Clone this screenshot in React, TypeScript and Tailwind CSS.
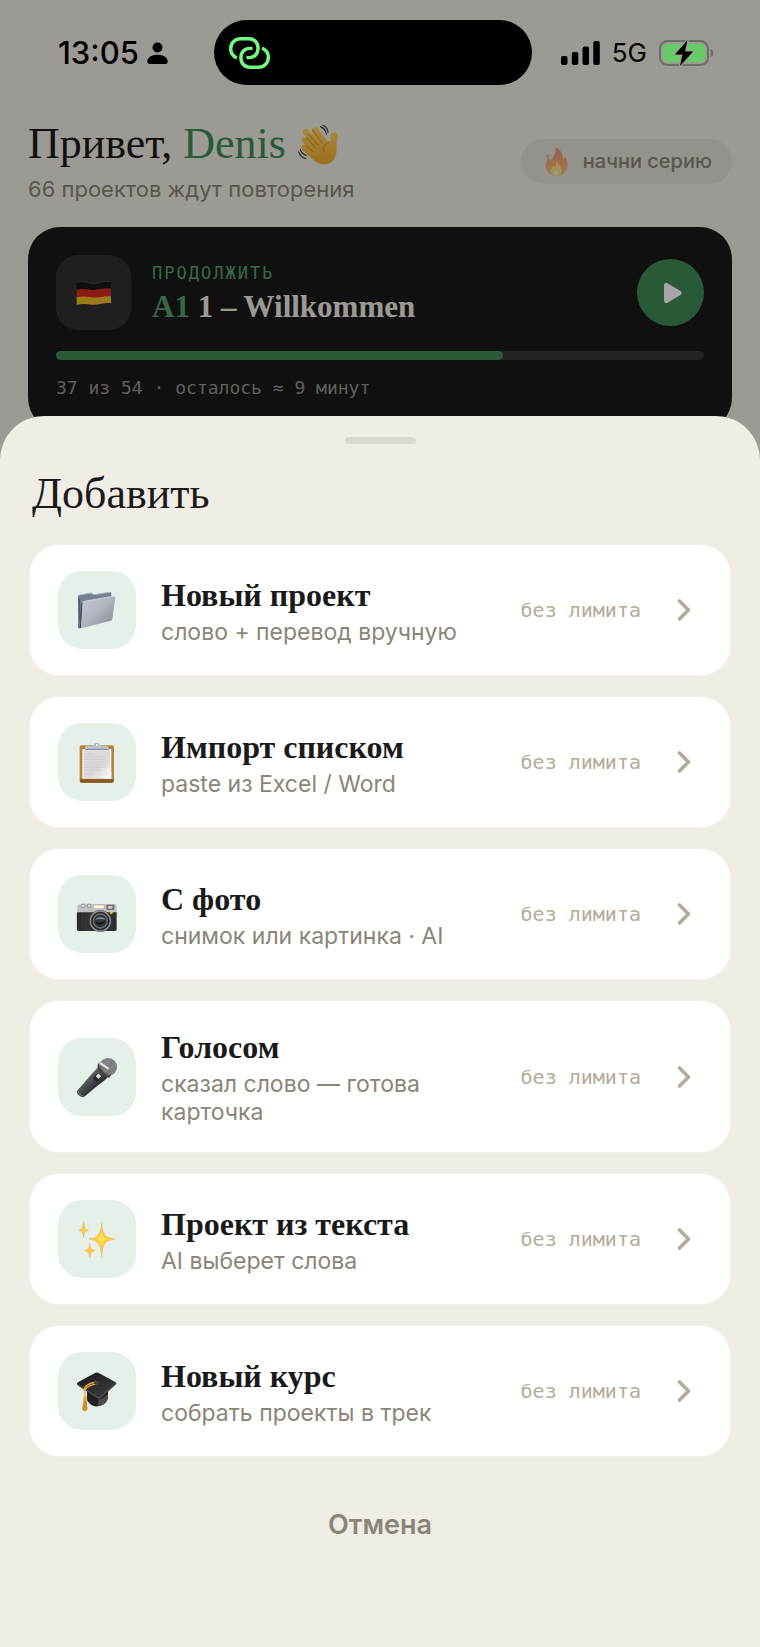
import React from "react";
import { ChevronRight } from "lucide-react";

type Action = {
  title: string;
  hint: string;
  icon: React.ReactNode;
};

/* Emoji-style drawings */

const WaveIcon = () => (
  <svg viewBox="890 370 130 130" className="size-[43px]" aria-hidden="true">
    <defs>
      <linearGradient id="hand" x1="0" y1="0" x2="0" y2="1">
        <stop offset="0" stopColor="#ffd860" />
        <stop offset="1" stopColor="#f0a92c" />
      </linearGradient>
    </defs>
    <path
      d="M941 385c5-5 12-3 16 3l28 37c4 5 9 4 9-2 0-9-1-18 6-22 8-4 16 1 16 9-1 12-4 20-3 32 2 31-12 52-36 53-18 1-31-10-42-20l-26-24c-9-9 2-20 11-13l-9-10c-9-11 4-20 12-12l-10-13c-9-12 6-22 14-12l14 16-3-9c-3-5-1-10 3-13z"
      fill="url(#hand)"
    />
    <g fill="none" stroke="#c9791a" strokeWidth="2.5" strokeLinecap="round">
      <path d="M927 403l31 34M923 416l27 30M920 438l22 19M941 392l28 37" />
      <path d="M990 427c-15 7-20 18-15 31" />
    </g>
    <g fill="none" stroke="#3c3c3c" strokeWidth="3.5" strokeLinecap="round">
      <path d="M964 381c10 4 16 12 18 23M972 377c8 4 13 12 15 21" />
      <path d="M898 457c4 11 11 18 22 21M903 450c3 9 9 15 18 18" />
    </g>
  </svg>
);

const FlameIcon = () => (
  <svg viewBox="485 437 88 88" className="size-[29px] opacity-60" aria-hidden="true">
    <defs>
      <linearGradient id="flame" x1="0" y1="0" x2="0" y2="1">
        <stop offset="0" stopColor="#f0543c" />
        <stop offset="0.6" stopColor="#ff8a35" />
        <stop offset="1" stopColor="#ffb347" />
      </linearGradient>
    </defs>
    <path
      d="M526 438c18 10 22 22 23 37 4-3 5-7 5-11 11 15 11 35 2 47-6 9-16 13-27 13-20 0-33-13-33-29 0-13 7-17 6-28 5 3 8 8 8 13 10-11 19-24 16-42z"
      fill="url(#flame)"
    />
    <path d="M502 459c4 2 4 7 0 12-3-4-3-9 0-12z" fill="#f0543c" />
    <path d="M527 476c3 11 18 19 18 34 0 9-7 13-16 13s-17-5-17-14c0-8 6-10 7-17 3 2 5 5 5 8 4-6 6-14 3-24z" fill="#ffe04a" />
    <path d="M528 503c5 6 9 9 8 14-1 9-16 9-17 0 0-5 6-8 9-14z" fill="#fff6b0" />
  </svg>
);

const FlagIcon = () => (
  <svg viewBox="217 170 126 126" className="size-[42px]" aria-hidden="true">
    <path d="M228 201c24-9 34 6 57 3 19-2 30-8 46-5v22c-22-3-40 8-62 4-15-3-26-4-41 1z" fill="#181818" />
    <path d="M228 224c15-5 26-3 41-1 22 4 40-7 62-3v25c-22-3-38 6-60 3-16-2-28-3-43 0z" fill="#d92a21" />
    <path d="M228 246c16-4 29-2 43 0 22 3 38-6 60-3v21c-20-4-35 6-57 4-18-2-28-4-46 0z" fill="#f0bd2d" />
    <path d="M228 201c24-9 34 6 57 3 19-2 30-8 46-5" fill="none" stroke="#555" strokeWidth="2" />
  </svg>
);

const FolderIcon = () => (
  <svg viewBox="228 421 126 126" className="size-[42px]" aria-hidden="true">
    <defs>
      <linearGradient id="folder" x1="0" y1="0" x2="1" y2="1">
        <stop offset="0" stopColor="#c9ccd5" />
        <stop offset="0.5" stopColor="#b0b4bf" />
        <stop offset="1" stopColor="#80848f" />
      </linearGradient>
    </defs>
    <path d="M234 444c0-3 2-5 5-5l34-6c4 0 5 5 9 5l48-8c3 0 4 2 4 5v15l-90 88c-5 3-10 1-10-4z" fill="#75808f" />
    <path d="M234 444c0-3 2-5 5-5l34-6c4 0 5 5 9 5l50-7" fill="none" stroke="#a8b2bf" strokeWidth="3" />
    <path d="M237 450l5 84" stroke="#4e5866" strokeWidth="5" />
    <path d="M247 463c0-3 2-5 5-5l90-16c3 0 4 1 4 4l-9 64c0 4-2 5-5 6l-86 22c-3 1-5-1-5-4z" fill="url(#folder)" />
    <path d="M247 463c0-3 2-5 5-5l92-16" fill="none" stroke="#dfe2e8" strokeWidth="2" />
    <path d="M241 538l5-76" stroke="#404955" strokeWidth="3" />
  </svg>
);

const ClipboardIcon = () => (
  <svg viewBox="108 96 126 126" className="size-[42px]" aria-hidden="true">
    <defs>
      <linearGradient id="paper" x1="0" y1="0" x2="1" y2="1">
        <stop offset="0" stopColor="#dcdcdc" />
        <stop offset="0.6" stopColor="#dadada" />
        <stop offset="1" stopColor="#fafafa" />
      </linearGradient>
    </defs>
    <rect x="119" y="109" width="103" height="112" rx="6" fill="#b98338" />
    <path d="M120 211h101v4q0 6-6 6h-89q-6 0-6-6z" fill="#855722" />
    <rect x="127" y="120" width="87" height="89" fill="#f4f4f4" />
    <rect x="131" y="124" width="79" height="82" fill="url(#paper)" />
    <path d="M133 135h28M133 143h61M133 151h65M133 159h65M133 167h64M133 175h66M133 183h50M133 195h24" stroke="#c8c8c8" strokeWidth="2" />
    <path d="M192 209l22-20v20z" fill="#fff" />
    <path d="M134 122c0-8 3-12 11-12h14c3 0 3-8 11-8s9 8 12 8h14c8 0 11 4 11 12z" fill="#bcc3cf" />
    <path d="M135 121h71" stroke="#79818f" strokeWidth="3" />
    <circle cx="171" cy="108" r="5" fill="#e7efea" stroke="#9aa3b4" strokeWidth="2" />
  </svg>
);

const CameraIcon = () => (
  <svg viewBox="108 552 126 126" className="size-[42px]" aria-hidden="true">
    <path d="M112 592q0-5 5-6h5l2-2h24l3 2 10-1h64q5 1 5 6v26H112z" fill="#bfc1c3" />
    <path d="M125 586h9v9h-9zM143 586h9v9h-9z" fill="#e9e9e9" stroke="#77797c" strokeWidth="2" />
    <rect x="161" y="588" width="31" height="11" fill="#fff3dc" stroke="#8e8e8e" />
    <rect x="199" y="587" width="24" height="16" rx="2" fill="#78736f" />
    <rect x="204" y="591" width="13" height="8" fill="#cfc5b4" />
    <path d="M111 610h119v51q0 5-5 5H116q-5 0-5-5z" fill="#303234" />
    <path d="M112 612v51M120 612v52M222 612v52" stroke="#16181a" strokeWidth="2" />
    <circle cx="181" cy="636" r="33" fill="#4d5053" />
    <circle cx="181" cy="636" r="30" fill="#24282b" stroke="#8d9194" strokeWidth="4" />
    <circle cx="181" cy="636" r="21" fill="#30373c" stroke="#6d7377" strokeWidth="4" />
    <path d="M165 633c6-12 26-12 32 0-11-4-22-3-32 0z" fill="#7c868b" />
    <path d="M165 638c10 5 22 4 32-3-5 12-25 15-32 3z" fill="#080a0c" />
    <circle cx="214" cy="611" r="4" fill="#f4d524" />
  </svg>
);

const MicIcon = () => (
  <svg viewBox="108 140 126 126" className="size-[42px]" aria-hidden="true">
    <defs>
      <linearGradient id="mic" x1="0" y1="0" x2="1" y2="1">
        <stop offset="0.2" stopColor="#77787a" />
        <stop offset="0.6" stopColor="#343538" />
        <stop offset="1" stopColor="#1c1c1e" />
      </linearGradient>
    </defs>
    <path d="M175 173l30 28c-9 12-18 18-29 25l-44 37c-6 5-26-11-21-18l37-43c10-12 18-19 27-29z" fill="url(#mic)" />
    <path d="M113 243c2 9 9 16 19 18" stroke="#77797b" strokeWidth="3" fill="none" />
    <circle cx="204" cy="173" r="27" fill="#77797c" />
    <path d="M182 157c12 2 28 14 37 37M190 150c15 6 30 20 35 35M202 146c12 6 22 15 27 28M181 169c12-2 27-10 33-22M188 187c17-4 32-16 38-29" stroke="#96999c" strokeWidth="2" fill="none" />
    <path d="M178 157c-5 15 17 41 35 40l-5 8c-18-1-39-23-35-39z" fill="#45474a" />
    <path d="M183 159l24 16-3 6-25-17z" fill="#e2e4e5" />
    <rect x="164" y="194" width="17" height="22" rx="3" fill="#232426" transform="rotate(43 173 204)" />
    <rect x="168" y="194" width="12" height="12" rx="2" fill="#d6d7d8" transform="rotate(43 174 202)" />
  </svg>
);

const SparklesIcon = () => (
  <svg viewBox="108 146 126 126" className="size-[42px]" aria-hidden="true">
    <g fill="#f9cf41" stroke="#efb267" strokeWidth="2" strokeLinejoin="round">
      <path d="M185 162c3 33 8 42 39 47-31 5-36 15-39 53-3-38-8-48-38-53 30-5 35-14 38-47z" />
      <path d="M131 157c2 18 5 24 14 26-9 2-12 7-14 22-2-15-5-20-14-22 9-2 12-8 14-26z" />
      <path d="M149 222c2 14 5 20 16 22-11 2-14 7-16 22-2-15-5-20-15-22 10-2 13-8 15-22z" />
    </g>
    <path d="M185 187c2 15 6 20 18 22-12 2-16 7-18 23-2-16-6-21-18-23 12-2 16-7 18-22z" fill="#ffe250" />
  </svg>
);

const CapIcon = () => (
  <svg viewBox="108 602 126 126" className="size-[42px]" aria-hidden="true">
    <defs>
      <linearGradient id="board" x1="0" y1="0" x2="1" y2="1">
        <stop offset="0" stopColor="#151515" />
        <stop offset="1" stopColor="#444446" />
      </linearGradient>
    </defs>
    <path d="M141 662v29c5 14 22 22 33 20 19-4 30-16 30-29v-28z" fill="#202021" />
    <path d="M176 690c11-1 20-9 28-16v8c0 13-11 25-30 29z" fill="#4b4b4c" />
    <path d="M111 644q-1-3 3-5l51-28q5-3 10-1l52 29q4 3 1 6l-44 41q-6 5-12 1l-56-37q-4-3-5-6z" fill="url(#board)" />
    <path d="M113 645l59 39q5 2 9-1l46-40" fill="none" stroke="#6c6c6e" strokeWidth="2" />
    <path d="M177 643c-19 1-40 9-42 21l-1 25M170 638c-20 3-38 12-39 27" fill="none" stroke="#e5a637" strokeWidth="4" />
    <ellipse cx="171" cy="641" rx="9" ry="5" fill="#39393b" />
    <path d="M131 687h8l4 33c-2 8-15 8-17 0z" fill="#dba03b" />
    <path d="M134 694l-2 28M138 694l1 27" stroke="#ad701b" strokeWidth="2" />
    <circle cx="135" cy="685" r="5" fill="#eaa92f" />
  </svg>
);

/* Status bar glyphs */

const PersonGlyph = () => (
  <svg viewBox="0 0 21 22" className="h-[22px] w-[21px]" aria-hidden="true">
    <circle cx="10.5" cy="5.5" r="5" />
    <path d="M0.3 19.5C0.3 15.500 5 12.800 10.500 12.800s10.200 2.700 10.200 6.700c0 1.700-1 2.500-2.500 2.500H2.800C1.300 22 .3 21.200.3 19.500z" />
  </svg>
);

const HotspotGlyph = () => (
  <svg viewBox="22 46 130 102" className="h-[34px] w-[43px]" fill="none" stroke="#75f982" strokeWidth="10.5" strokeLinecap="butt" aria-hidden="true">
    <path d="M49 112C36 106 30 96 30 84C30 66 44 54 60 54H86C102 54 113 66 113 83C113 99 102 111 86 111H78" />
    <path d="M125 82C138 88 144 98 144 110C144 128 130 140 114 140H88C72 140 61 128 61 111C61 95 72 83 88 83H96" />
  </svg>
);

const SignalGlyph = () => (
  <svg viewBox="0 0 39 24" className="h-6 w-[39px]" aria-hidden="true">
    <rect x="0" y="15" width="6.500" height="9" rx="2" />
    <rect x="10.800" y="11" width="6.500" height="13" rx="2" />
    <rect x="21.500" y="5.500" width="6.500" height="18.500" rx="2" />
    <rect x="32.300" y="0" width="6.500" height="24" rx="2" />
  </svg>
);

const BatteryGlyph = () => (
  <svg viewBox="0 0 55 28" className="h-7 w-[55px]" aria-hidden="true">
    <rect x="1" y="2" width="48" height="24" rx="7.500" fill="none" stroke="#6f6d69" strokeWidth="2" />
    <path d="M51.500 10c2 .5 3 2 3 4s-1 3.500-3 4z" fill="#6f6d69" />
    <rect x="4" y="5" width="42" height="18" rx="4.500" fill="#65cc67" />
    <path
      d="M28.500 1L16 15.500h7.500L21 27l13-14.500h-8z"
      fill="#000"
      stroke="#9c9a94"
      strokeWidth="2.500"
      strokeLinejoin="round"
      paintOrder="stroke"
    />
  </svg>
);

const actions: Action[] = [
  { title: "Новый проект", hint: "слово + перевод вручную", icon: <FolderIcon /> },
  { title: "Импорт списком", hint: "paste из Excel / Word", icon: <ClipboardIcon /> },
  { title: "С фото", hint: "снимок или картинка · AI", icon: <CameraIcon /> },
  { title: "Голосом", hint: "сказал слово — готова карточка", icon: <MicIcon /> },
  { title: "Проект из текста", hint: "AI выберет слова", icon: <SparklesIcon /> },
  { title: "Новый курс", hint: "собрать проекты в трек", icon: <CapIcon /> },
];

const StatusBar = () => (
  <div className="relative z-10 flex items-center pt-5 pr-[46px] pl-8">
    <div className="flex flex-1 items-center gap-2">
      <span className="ml-[26px] text-[31px] leading-9 font-medium">13:05</span>
      <PersonGlyph />
    </div>
    <div className="flex h-[65px] w-[318px] items-center rounded-full bg-black pl-[14px]">
      <HotspotGlyph />
    </div>
    <div className="flex flex-1 items-center justify-end gap-3">
      <SignalGlyph />
      <span className="text-[26px] leading-8">5G</span>
      <BatteryGlyph />
    </div>
  </div>
);

const ActionCard = ({ title, hint, icon }: Action) => (
  <button
    type="button"
    className="flex w-full cursor-pointer items-center gap-[25px] rounded-[30px] border border-[#f2f1ef] bg-white px-7 py-[26px] text-left"
  >
    <span className="flex size-[78px] shrink-0 items-center justify-center rounded-3xl bg-[#e5f0e8]">
      {icon}
    </span>
    <span className="min-w-0 flex-1">
      <span className="block font-['Liberation_Serif',serif] text-[32px] leading-[41px] font-bold text-[#1a1a1a]">
        {title}
      </span>
      <span className="mt-[2px] block text-[23px] leading-7 text-[#8a8578]">{hint}</span>
    </span>
    <span className="shrink-0 font-['DejaVu_Sans_Mono',monospace] text-[20px] leading-7 text-[#b5ab98]">
      без лимита
    </span>
    <ChevronRight size={36} strokeWidth={2.4} className="shrink-0 text-[#b5ab98]" aria-hidden="true" />
  </button>
);

export default function App() {
  return (
    <div className="relative flex min-h-screen w-full flex-col bg-[#f0ede4] font-['Inter',sans-serif] text-black">
      {/* Dimmed backdrop over the home screen */}
      <div className="pointer-events-none absolute inset-0 z-[5] bg-black/35" />

      <StatusBar />

      {/* Home screen */}
      <main className="px-7 pt-[34px]">
        <div className="flex items-center justify-between pb-[23px]">
          <div>
            <h1 className="flex items-center gap-[10px] font-['Liberation_Serif',serif] text-[44px] leading-[50px] text-[#1a1a1a]">
              <span>
                Привет, <span className="text-[#3f8a56]">Denis</span>
              </span>
              <WaveIcon />
            </h1>
            <p className="mt-[5px] text-[22px] leading-[30px] text-[#8a8578]">66 проектов ждут повторения</p>
          </div>
          <div className="flex items-center gap-3 rounded-full bg-[#e4e1d8] py-2 pr-5 pl-[21px]">
            <FlameIcon />
            <span className="text-[20px] leading-[29px] font-medium text-[#8a8578]">начни серию</span>
          </div>
        </div>

        <section className="rounded-[32px] bg-[#1a1a1a] p-7">
          <div className="flex items-center gap-[21px]">
            <div className="flex size-[75px] items-center justify-center rounded-[22px] bg-[#313131]">
              <FlagIcon />
            </div>
            <div className="flex-1">
              <div className="font-['DejaVu_Sans_Mono',monospace] text-[17px] leading-6 tracking-[2px] text-[#55a06b]">
                ПРОДОЛЖИТЬ
              </div>
              <h2 className="mt-1 font-['Liberation_Serif',serif] text-[31px] leading-9 font-bold text-[#f0ede4]">
                <span className="text-[#55a06b]">A1</span> 1 – Willkommen
              </h2>
            </div>
            <button
              type="button"
              aria-label="Продолжить"
              className="flex size-[67px] items-center justify-center rounded-full bg-[#3f8a56]"
            >
              <svg viewBox="0 0 20 22" className="ml-1 h-[22px] w-5" fill="#ffffff" aria-hidden="true">
                <path d="M1 3.200C1 1.200 2.800.4 4.400 1.300L17.500 9c1.700 1 1.700 3 0 4L4.400 20.700C2.800 21.600 1 20.800 1 18.800z" />
              </svg>
            </button>
          </div>
          <div className="mt-[21px] h-[9px] overflow-hidden rounded-full bg-[#363636]">
            <div className="h-full w-[69%] rounded-full bg-[#3f8a56]" />
          </div>
          <p className="mt-[14px] font-['DejaVu_Sans_Mono',monospace] text-[18px] leading-7 text-[#94928d]">
            37 из 54 · осталось ≈ 9 минут
          </p>
        </section>
      </main>

      {/* Bottom sheet */}
      <section
        role="dialog"
        aria-labelledby="sheet-title"
        className="relative z-10 -mt-[14px] flex flex-1 flex-col rounded-t-[44px] bg-[#f0ede4] px-[29px] pt-[21px]"
      >
        <div className="mx-auto h-[7px] w-[71px] rounded-full bg-[#dbd8d0]" />
        <h2
          id="sheet-title"
          className="my-[25px] px-[3px] font-['Liberation_Serif',serif] text-[44px] leading-[50px] text-[#1a1a1a]"
        >
          Добавить
        </h2>
        <div className="flex flex-col gap-5">
          {actions.map((action) => (
            <ActionCard key={action.title} {...action} />
          ))}
        </div>
        <button type="button" className="mt-10 w-full cursor-pointer py-2 text-[27px] leading-10 font-semibold text-[#8a8578]">
          Отмена
        </button>
      </section>
    </div>
  );
}
